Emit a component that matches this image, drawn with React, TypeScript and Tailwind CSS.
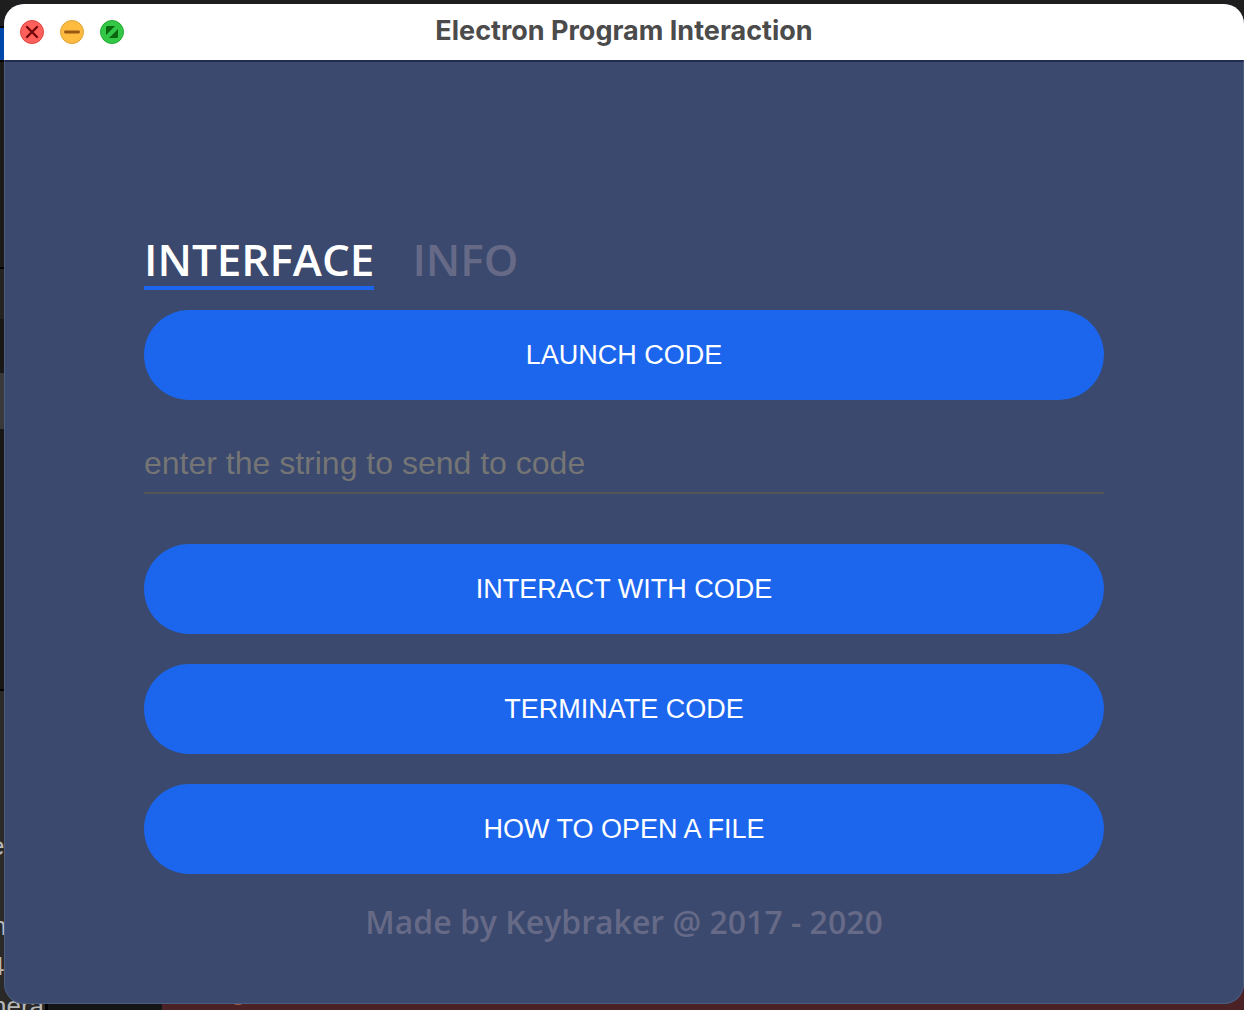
import React, { useState } from "react";

function Backdrop() {
  return (
    <div
      aria-hidden="true"
      className="absolute inset-0 flex flex-col overflow-hidden bg-[#1e1e1e] font-['Liberation_Sans',sans-serif] text-[#b8b8b8]"
    >
      <div className="h-[26px]" />
      <div className="h-9 border-y-2 border-black bg-[#0047ab]" />
      <div className="h-[205px] bg-[#1b1a19]" />
      <div className="h-0.5 bg-black" />
      <div className="h-[50px] bg-[#242322]" />
      <div className="h-[54px] bg-[#181716]" />
      <div className="h-14 bg-[#3a3939]" />
      <div className="h-[260px] bg-[#181716]" />
      <div className="h-0.5 bg-black" />
      <div className="flex-1 bg-[#2a2928]" />
      <div className="flex h-10 bg-[#2a2928]">
        <div className="w-[45px]" />
        <div className="w-[3px] bg-black" />
        <div className="w-[114px] bg-[#141616]" />
        <div className="flex-1 bg-[#4a2226]" />
      </div>
      <span className="absolute -left-2.5 top-[831px] text-[26px] leading-[30px]">e</span>
      <span className="absolute -left-2 top-[911px] text-[26px] leading-[30px]">n</span>
      <span className="absolute -left-2.5 top-[951px] text-[26px] leading-[30px]">4</span>
      <span className="absolute -left-2 top-[991px] text-[26px] leading-[30px]">nera</span>
      <span className="absolute left-[234px] top-[1000px] h-[5px] w-2 rounded-full bg-[#a05542]" />
    </div>
  );
}

function TitleBar() {
  return (
    <header className="grid h-14 grid-cols-[1fr_auto_1fr] items-center bg-white px-4">
      <div className="flex gap-4">
        <button aria-label="Close" className="size-6">
          <svg viewBox="0 0 24 24" className="size-6">
            <circle cx="12" cy="12" r="11.5" fill="#ff605c" stroke="#e0443e" />
            <path d="M7 7 17 17M17 7 7 17" stroke="#730606" strokeWidth="2.4" strokeLinecap="round" />
          </svg>
        </button>
        <button aria-label="Minimize" className="size-6">
          <svg viewBox="0 0 24 24" className="size-6">
            <circle cx="12" cy="12" r="11.5" fill="#fdbc40" stroke="#dea034" />
            <path d="M5.4 12H18.6" stroke="#985712" strokeWidth="2.8" strokeLinecap="round" />
          </svg>
        </button>
        <button aria-label="Zoom" className="size-6">
          <svg viewBox="0 0 24 24" className="size-6">
            <circle cx="12" cy="12" r="11.5" fill="#33c748" stroke="#27a934" />
            <path d="M7.5 6H15L6 15V7.5Q6 6 7.5 6ZM18 9V16.5Q18 18 16.5 18H9Z" fill="#0b650d" />
          </svg>
        </button>
      </div>
      <h1 className="pb-0.5 font-['Inter',sans-serif] text-[27px] leading-8 font-bold text-[#4b4b4b]">
        Electron Program Interaction
      </h1>
      <div />
    </header>
  );
}

function ActionButton({ children }: { children: React.ReactNode }) {
  return (
    <button className="h-[90px] w-full rounded-full bg-[#1c66ed] font-['Liberation_Sans',sans-serif] text-[27px] leading-8 text-white">
      {children}
    </button>
  );
}

function Tab({ label, active, onSelect }: { label: string; active: boolean; onSelect: () => void }) {
  return (
    <button
      role="tab"
      aria-selected={active}
      onClick={onSelect}
      className={
        "h-[60px] border-b-4 pt-0.5 text-[44px] leading-[52px] font-semibold " +
        (active ? "border-[#1c66ed] text-white" : "border-transparent text-[#666a87]")
      }
    >
      {label}
    </button>
  );
}

export default function App() {
  const [tab, setTab] = useState("INTERFACE");
  return (
    <div className="relative min-h-screen overflow-hidden pt-1 pb-1.5 pl-1">
      <Backdrop />
      <div className="relative overflow-hidden rounded-[20px] bg-[#3a496d]">
        <TitleBar />
        <main className="rounded-b-[20px] border border-t-2 border-[#4d5d80] border-t-[#1f2c50] px-[139px] pt-[168px] pb-[59px] font-['Open_Sans',sans-serif]">
          <div role="tablist" className="flex gap-[38px]">
            <Tab label="INTERFACE" active={tab === "INTERFACE"} onSelect={() => setTab("INTERFACE")} />
            <Tab label="INFO" active={tab === "INFO"} onSelect={() => setTab("INFO")} />
          </div>
          <div className="mt-5 flex flex-col gap-[30px]">
            <ActionButton>LAUNCH CODE</ActionButton>
            <input
              type="text"
              aria-label="String to send to code"
              placeholder="enter the string to send to code"
              className="mt-1 mb-5 h-[60px] w-full border-b-2 border-[#555555] bg-transparent font-['Liberation_Sans',sans-serif] text-[32px] text-white outline-none placeholder:text-[#757575]"
            />
            <ActionButton>INTERACT WITH CODE</ActionButton>
            <ActionButton>TERMINATE CODE</ActionButton>
            <ActionButton>HOW TO OPEN A FILE</ActionButton>
          </div>
          <footer className="mt-[26px] text-center text-[32px] leading-[44px] font-semibold text-[#666a87]">
            Made by Keybraker @ 2017 - 2020
          </footer>
        </main>
      </div>
    </div>
  );
}
